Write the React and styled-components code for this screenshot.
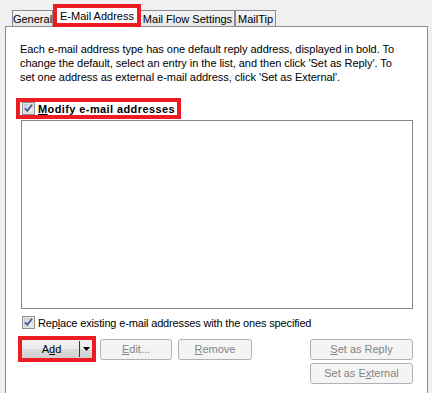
import React from "react";
import styled, { createGlobalStyle } from "styled-components";

const Global = createGlobalStyle`
  body {
    margin: 0;
    background: #f0f0f0;
    font-family: "Liberation Sans", Arial, sans-serif;
    font-size: 11px;
    color: #000;
  }
`;

const Page = styled.div`
  width: 432px;
  height: 393px;
  overflow: hidden;
  background: #f0f0f0;
`;

const TabStrip = styled.div`
  display: flex;
  align-items: flex-end;
  height: 26px;
  padding-left: 12px;
`;

const Tab = styled.div`
  box-sizing: border-box;
  width: ${(p) => p.$w}px;
  height: 16px;
  border: 1px solid #898c95;
  border-bottom: none;
  border-left: ${(p) => (p.$noLeft ? "none" : "1px solid #898c95")};
  background: linear-gradient(#f4f4f4, #e6e6e6);
  display: flex;
  align-items: center;
  justify-content: center;
  white-space: nowrap;
  padding-top: 1px;
`;

const ActiveTab = styled.div`
  box-sizing: border-box;
  width: 88px;
  height: 23px;
  margin-bottom: -1px;
  border: 4px solid #ed1c24;
  background: #fff;
  display: flex;
  align-items: center;
  justify-content: center;
  white-space: nowrap;
  position: relative;
  z-index: 1;
`;

const Panel = styled.div`
  box-sizing: border-box;
  margin-left: 5px;
  width: 423px;
  height: 367px;
  border: 1px solid #898c95;
  border-bottom: none;
  background: #fff;
  padding: 15px 14px 0 15px;
  display: flex;
  flex-direction: column;
`;

const Description = styled.p`
  margin: 0 0 0 -1px;
  line-height: 14px;
  white-space: nowrap;
  letter-spacing: -0.04px;
`;

const Highlight = styled.div`
  align-self: flex-start;
  display: flex;
  align-items: center;
  gap: 3px;
  height: 13px;
  padding: 0 2px 0 2px;
  border: 4px solid #ed1c24;
  margin: 14px 0 0 -5px;
  font-weight: bold;
  white-space: nowrap;
  letter-spacing: 0.4px;
`;

const ListBox = styled.div`
  box-sizing: border-box;
  width: 392px;
  height: 189px;
  margin-top: 1px;
  border: 1px solid #828790;
  background: #fff;
`;

const CheckRow = styled.label`
  display: flex;
  align-items: center;
  gap: 3px;
  height: 13px;
  margin: 7px 0 0 1px;
  white-space: nowrap;
  letter-spacing: -0.15px;
`;

const ButtonRow = styled.div`
  display: flex;
  align-items: center;
  height: 22px;
  margin-top: ${(p) => p.$top}px;
`;

const Button = styled.div`
  box-sizing: border-box;
  width: ${(p) => p.$w}px;
  height: 21px;
  margin-left: ${(p) => p.$ml || 0}px;
  border: 1px solid ${(p) => (p.$disabled ? "#adb2b5" : "#707070")};
  border-radius: 3px;
  background: ${(p) =>
    p.$disabled
      ? "#f4f4f4"
      : "linear-gradient(#f2f2f2, #ebebeb 50%, #dddddd 50%, #cfcfcf)"};
  color: ${(p) => (p.$disabled ? "#838383" : "#000")};
  display: flex;
  align-items: center;
  justify-content: center;
  white-space: nowrap;
`;

const SplitWrap = styled.div`
  box-sizing: border-box;
  width: 78px;
  height: 26px;
  margin-left: -3px;
  border: 4px solid #ed1c24;
  display: flex;
  background: linear-gradient(#f2f2f2, #ebebeb 50%, #dddddd 50%, #cfcfcf);
`;

const SplitMain = styled.div`
  flex: 1;
  display: flex;
  align-items: center;
  justify-content: center;
  padding-left: 2px;
`;

const SplitArrow = styled.div`
  width: 12px;
  display: flex;
  align-items: center;
  justify-content: center;
  border-left: 1px solid #3c3c3c;
  margin: 1px 0;
`;

const Spacer = styled.div`
  flex: 1;
`;

function Check() {
  return (
    <svg width="13" height="13" viewBox="0 0 13 13">
      <defs>
        <linearGradient id="cbg" x1="0" y1="0" x2="1" y2="1">
          <stop offset="0" stopColor="#cbcfd5" />
          <stop offset="1" stopColor="#f6f6f6" />
        </linearGradient>
      </defs>
      <rect x="0.5" y="0.5" width="12" height="12" fill="#f4f4f4" stroke="#8e8f8f" />
      <rect x="2" y="2" width="9" height="9" fill="url(#cbg)" stroke="#bfc3c9" strokeWidth="0.6" />
      <path d="M3 6.2 L5.3 8.8 L10 2.8" fill="none" stroke="#3a5795" strokeWidth="1.7" />
    </svg>
  );
}

export default function App() {
  return (
    <Page>
      <Global />
      <TabStrip>
        <Tab $w={41}>General</Tab>
        <ActiveTab>E-Mail Address</ActiveTab>
        <Tab $w={94} $noLeft>Mail Flow Settings</Tab>
        <Tab $w={41}>MailTip</Tab>
      </TabStrip>
      <Panel>
        <Description>
          Each e-mail address type has one default reply address, displayed in bold. To
          <br />
          change the default, select an entry in the list, and then click 'Set as Reply'. To
          <br />
          set one address as external e-mail address, click 'Set as External'.
        </Description>
        <Highlight>
          <Check />
          <span>
            <u>M</u>odify e-mail addresses
          </span>
        </Highlight>
        <ListBox />
        <CheckRow>
          <Check />
          <span>
            Rep<u>l</u>ace existing e-mail addresses with the ones specified
          </span>
        </CheckRow>
        <ButtonRow $top={9}>
          <SplitWrap>
            <SplitMain>
              A<u>d</u>d
            </SplitMain>
            <SplitArrow>
              <svg width="7" height="4" viewBox="0 0 7 4">
                <path d="M0 0 H7 L3.5 4 Z" fill="#000" />
              </svg>
            </SplitArrow>
          </SplitWrap>
          <Button $w={72} $ml={4} $disabled>
            <span>
              <u>E</u>dit...
            </span>
          </Button>
          <Button $w={74} $ml={6} $disabled>
            <span>
              <u>R</u>emove
            </span>
          </Button>
          <Spacer />
          <Button $w={103} $disabled>
            <span>
              <u>S</u>et as Reply
            </span>
          </Button>
        </ButtonRow>
        <ButtonRow $top={2}>
          <Spacer />
          <Button $w={103} $disabled>
            <span>
              Set as E<u>x</u>ternal
            </span>
          </Button>
        </ButtonRow>
      </Panel>
    </Page>
  );
}
